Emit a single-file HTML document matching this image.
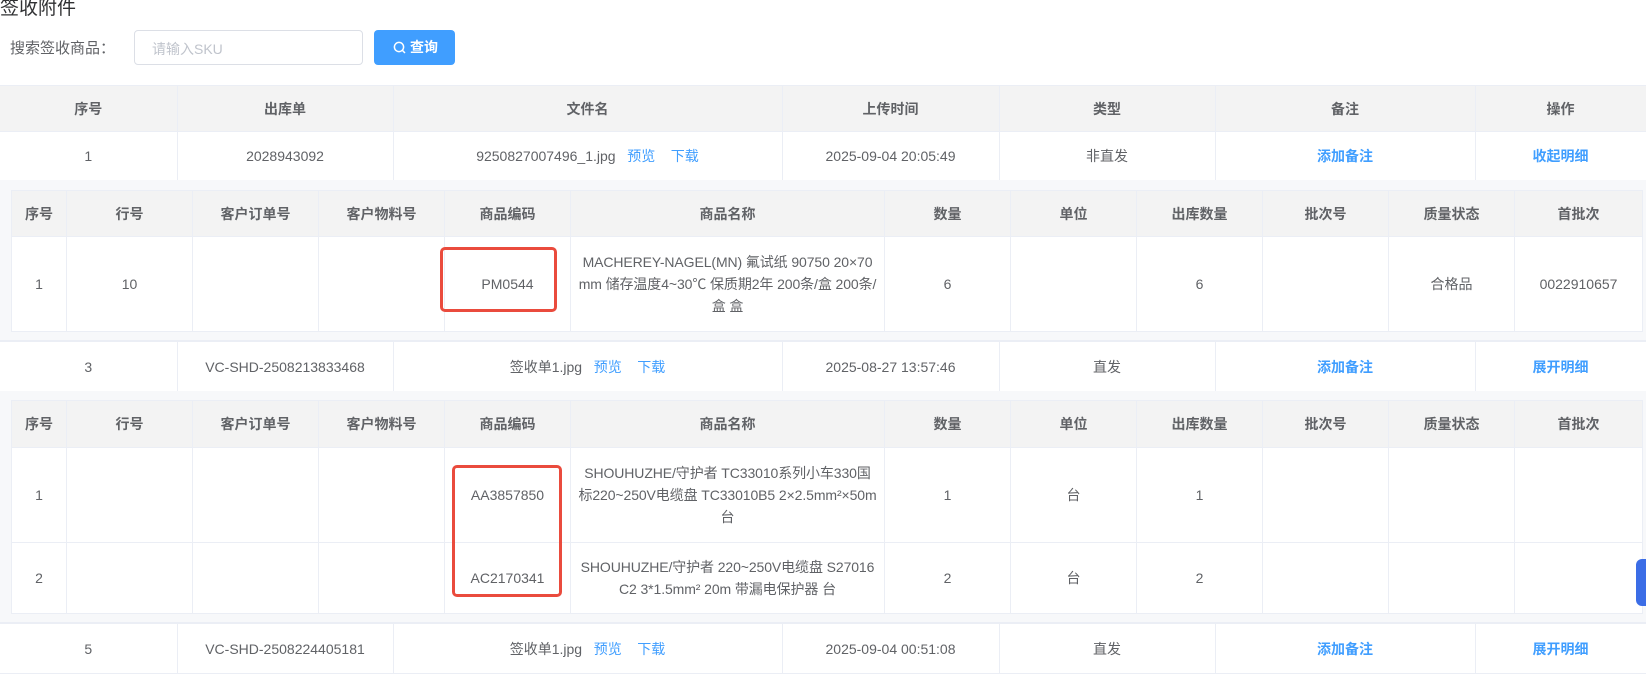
<!DOCTYPE html>
<html><head><meta charset="utf-8"><style>
*{box-sizing:border-box;margin:0;padding:0}
body{width:1646px;height:682px;overflow:hidden;background:#fff;font-family:"Liberation Sans","Noto Sans CJK SC",sans-serif;font-size:14px;color:#606266;position:relative}
.title{position:absolute;left:0;top:-7px;font-size:19px;color:#303133}
.lbl{position:absolute;left:10px;top:37px;font-size:15px;color:#606266}
.inp{position:absolute;left:134px;top:30px;width:229px;height:35px;border:1px solid #dcdfe6;border-radius:4px;color:#c0c4cc;padding:8px 17px;font-size:14px}
.btn{position:absolute;left:374px;top:30px;width:81px;height:35px;background:#409eff;border-radius:4px;color:#fff;font-weight:bold;font-size:14px;line-height:35px;padding-left:19px}
.btn svg{vertical-align:-2px;margin-right:4px}
table{border-collapse:collapse;table-layout:fixed;position:absolute}
td,th{text-align:center;border:1px solid #ebeef5;border-left:none;border-right:1px solid #ebeef5}
th{background:#f3f3f3;color:#606266;font-weight:bold;font-size:14px}
.outer{left:0;width:1646px}
a{color:#409eff;text-decoration:none}
.lk{color:#409eff;font-weight:bold}
.exp{position:absolute;left:0;width:1646px;background:#f7f8fa;border-bottom:1px solid #ebeef5}
.inner{left:11px;width:1631px;background:#fff}
.inner td,.inner th{border:1px solid #ebeef5}
.nm{line-height:22px;padding:0;white-space:nowrap;letter-spacing:-0.1px}
.red{position:absolute;border:3px solid #ea4b3d;border-radius:5px}
</style></head><body>
<div class="title">签收附件</div>
<div class="lbl">搜索签收商品：</div>
<div class="inp">请输入SKU</div>
<div class="btn"><svg width="13" height="13" viewBox="0 0 13 13"><circle cx="6" cy="6" r="4.6" fill="none" stroke="#fff" stroke-width="1.5"/><path d="M9.4 9.4L12 12" stroke="#fff" stroke-width="1.5"/></svg>查询</div>

<table class="outer" style="top:85px">
<colgroup><col style="width:177px"><col style="width:216px"><col style="width:389px"><col style="width:217px"><col style="width:216px"><col style="width:260px"><col style="width:171px"></colgroup>
<tr style="height:46px"><th>序号</th><th>出库单</th><th>文件名</th><th>上传时间</th><th>类型</th><th>备注</th><th>操作</th></tr>
<tr style="height:49px"><td>1</td><td>2028943092</td><td>9250827007496_1.jpg &nbsp;&nbsp;<a>预览</a>&nbsp;&nbsp;&nbsp;&nbsp;<a>下载</a></td><td>2025-09-04 20:05:49</td><td>非直发</td><td class="lk">添加备注</td><td class="lk">收起明细</td></tr>
</table>
<div class="exp" style="top:180px;height:161px"></div>
<table class="inner" style="top:190px">
<colgroup><col style="width:55px"><col style="width:126px"><col style="width:126px"><col style="width:126px"><col style="width:126px"><col style="width:314px"><col style="width:126px"><col style="width:126px"><col style="width:126px"><col style="width:126px"><col style="width:126px"><col style="width:128px"></colgroup>
<tr style="height:46px"><th>序号</th><th>行号</th><th>客户订单号</th><th>客户物料号</th><th>商品编码</th><th>商品名称</th><th>数量</th><th>单位</th><th>出库数量</th><th>批次号</th><th>质量状态</th><th>首批次</th></tr>
<tr style="height:95px"><td>1</td><td>10</td><td></td><td></td><td>PM0544</td><td class="nm">MACHEREY-NAGEL(MN) 氟试纸 90750 20×70<br>mm 储存温度4~30℃ 保质期2年 200条/盒 200条/<br>盒 盒</td><td>6</td><td></td><td>6</td><td></td><td>合格品</td><td>0022910657</td></tr>
</table>
<table class="outer" style="top:341px">
<colgroup><col style="width:177px"><col style="width:216px"><col style="width:389px"><col style="width:217px"><col style="width:216px"><col style="width:260px"><col style="width:171px"></colgroup>
<tr style="height:50px"><td>3</td><td>VC-SHD-2508213833468</td><td>签收单1.jpg &nbsp;&nbsp;<a>预览</a>&nbsp;&nbsp;&nbsp;&nbsp;<a>下载</a></td><td>2025-08-27 13:57:46</td><td>直发</td><td class="lk">添加备注</td><td class="lk">展开明细</td></tr>
</table>
<div class="exp" style="top:391px;height:232px"></div>
<table class="inner" style="top:400px">
<colgroup><col style="width:55px"><col style="width:126px"><col style="width:126px"><col style="width:126px"><col style="width:126px"><col style="width:314px"><col style="width:126px"><col style="width:126px"><col style="width:126px"><col style="width:126px"><col style="width:126px"><col style="width:128px"></colgroup>
<tr style="height:47px"><th>序号</th><th>行号</th><th>客户订单号</th><th>客户物料号</th><th>商品编码</th><th>商品名称</th><th>数量</th><th>单位</th><th>出库数量</th><th>批次号</th><th>质量状态</th><th>首批次</th></tr>
<tr style="height:95px"><td>1</td><td></td><td></td><td></td><td>AA3857850</td><td class="nm">SHOUHUZHE/守护者 TC33010系列小车330国<br>标220~250V电缆盘 TC33010B5 2×2.5mm²×50m<br>台</td><td>1</td><td>台</td><td>1</td><td></td><td></td><td></td></tr>
<tr style="height:71px"><td>2</td><td></td><td></td><td></td><td>AC2170341</td><td class="nm">SHOUHUZHE/守护者 220~250V电缆盘 S27016<br>C2 3*1.5mm² 20m 带漏电保护器 台</td><td>2</td><td>台</td><td>2</td><td></td><td></td><td></td></tr>
</table>
<table class="outer" style="top:623px">
<colgroup><col style="width:177px"><col style="width:216px"><col style="width:389px"><col style="width:217px"><col style="width:216px"><col style="width:260px"><col style="width:171px"></colgroup>
<tr style="height:50px"><td>5</td><td>VC-SHD-2508224405181</td><td>签收单1.jpg &nbsp;&nbsp;<a>预览</a>&nbsp;&nbsp;&nbsp;&nbsp;<a>下载</a></td><td>2025-09-04 00:51:08</td><td>直发</td><td class="lk">添加备注</td><td class="lk">展开明细</td></tr>
</table>
<div class="red" style="left:440px;top:247px;width:117px;height:65px"></div>
<div class="red" style="left:452px;top:465px;width:110px;height:132px"></div>
<div style="position:absolute;left:1636px;top:559px;width:12px;height:47px;background:#3b6de6;border-radius:6px 0 0 6px"></div>
</body></html>
